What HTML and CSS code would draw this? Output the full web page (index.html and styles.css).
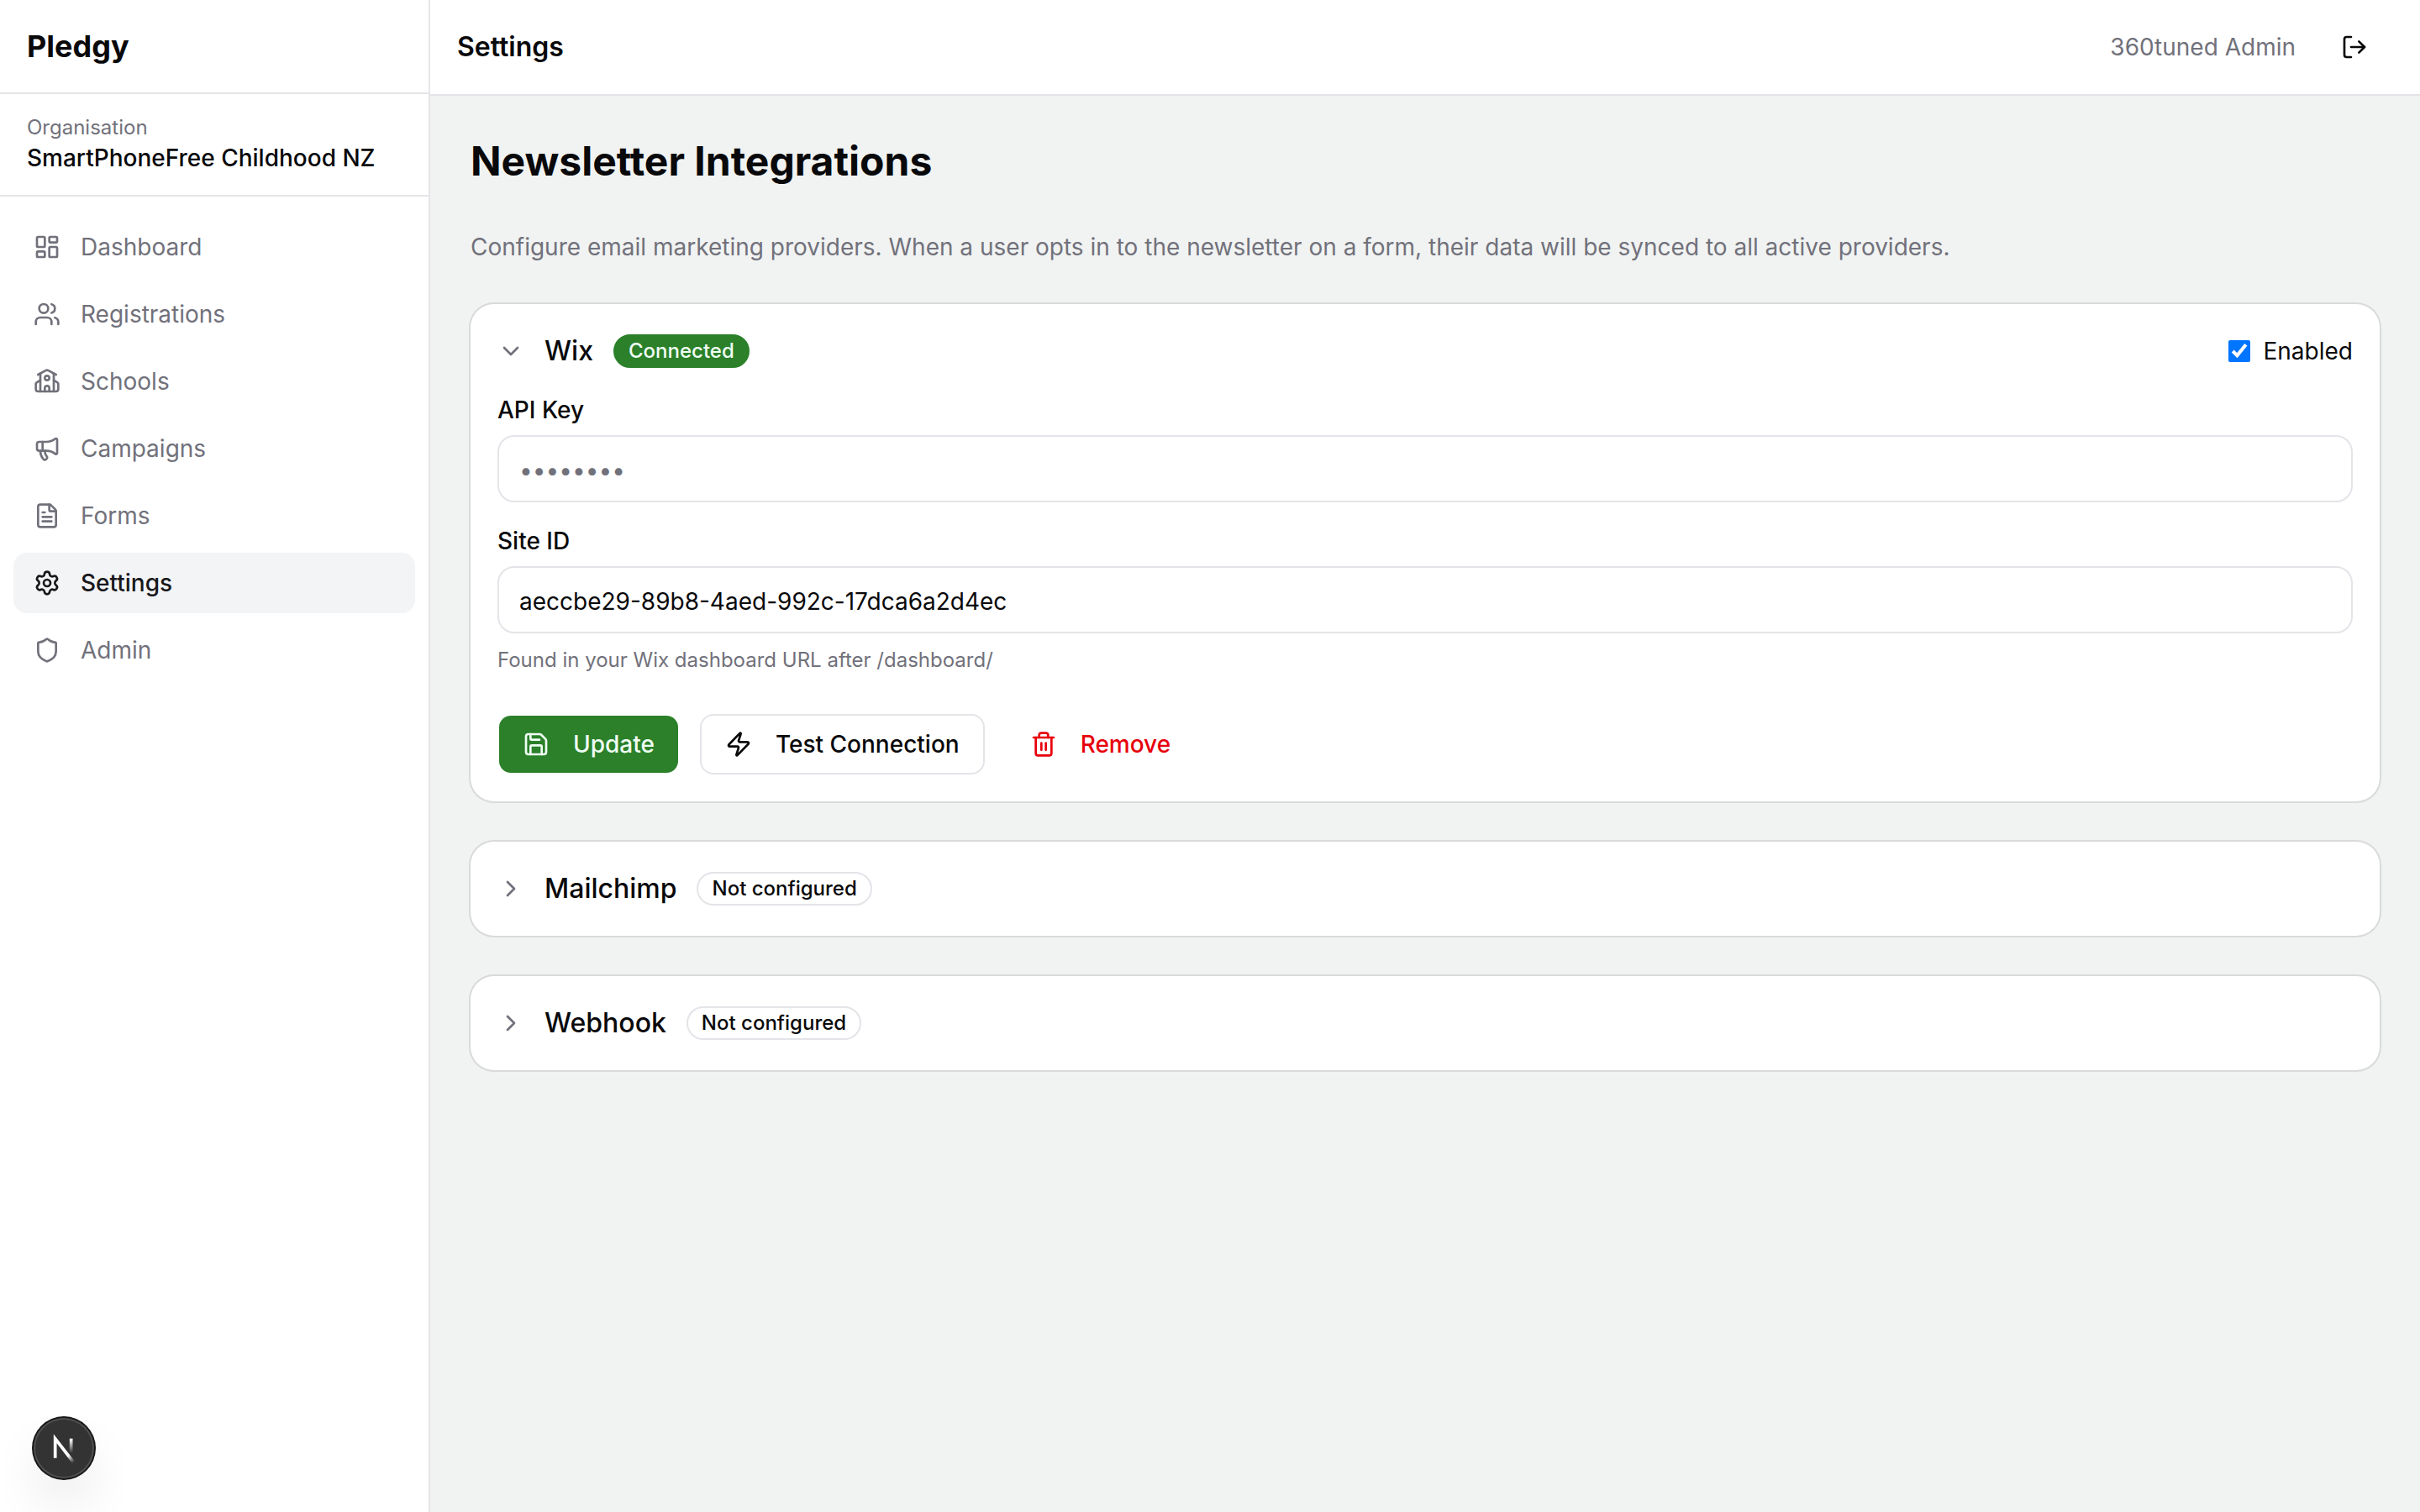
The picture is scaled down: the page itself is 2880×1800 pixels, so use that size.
FILE: index.html
```
<!DOCTYPE html>
<html lang="en">
<head>
    <meta charset="UTF-8">
    <meta name="viewport" content="width=device-width, initial-scale=1.0">
    <title>Settings - Pledgy</title>
    <link rel="stylesheet" href="styles.css">
</head>
<body>

    <div class="app">
        <aside class="sidebar">
            <div class="sidebar-brand">Pledgy</div>
            <div class="sidebar-org">
                <div class="org-label">Organisation</div>
                <div class="org-name">SmartPhoneFree Childhood NZ</div>
            </div>
            <nav class="sidebar-nav">
                <a class="nav-link" href="#dashboard">
                    <svg class="icon" viewBox="0 0 24 24"><rect width="7" height="9" x="3" y="3" rx="1"/><rect width="7" height="5" x="14" y="3" rx="1"/><rect width="7" height="9" x="14" y="12" rx="1"/><rect width="7" height="5" x="3" y="16" rx="1"/></svg>
                    Dashboard
                </a>
                <a class="nav-link" href="#registrations">
                    <svg class="icon" viewBox="0 0 24 24"><path d="M16 21v-2a4 4 0 0 0-4-4H6a4 4 0 0 0-4 4v2"/><path d="M16 3.128a4 4 0 0 1 0 7.744"/><path d="M22 21v-2a4 4 0 0 0-3-3.87"/><circle cx="9" cy="7" r="4"/></svg>
                    Registrations
                </a>
                <a class="nav-link" href="#schools">
                    <svg class="icon" viewBox="0 0 24 24"><path d="M14 21v-3a2 2 0 0 0-4 0v3"/><path d="M18 5v16"/><path d="m4 6 7.106-3.79a2 2 0 0 1 1.788 0L20 6"/><path d="m6 11-3.52 2.147a1 1 0 0 0-.48.854V19a2 2 0 0 0 2 2h16a2 2 0 0 0 2-2v-5a1 1 0 0 0-.48-.853L18 11"/><path d="M6 5v16"/><circle cx="12" cy="9" r="2"/></svg>
                    Schools
                </a>
                <a class="nav-link" href="#campaigns">
                    <svg class="icon" viewBox="0 0 24 24"><path d="M11 6a13 13 0 0 0 8.4-2.8A1 1 0 0 1 21 4v12a1 1 0 0 1-1.6.8A13 13 0 0 0 11 14H5a2 2 0 0 1-2-2V8a2 2 0 0 1 2-2z"/><path d="M6 14a12 12 0 0 0 2.4 7.2 2 2 0 0 0 3.2-2.4A8 8 0 0 1 10 14"/><path d="M8 6v8"/></svg>
                    Campaigns
                </a>
                <a class="nav-link" href="#forms">
                    <svg class="icon" viewBox="0 0 24 24"><path d="M6 22a2 2 0 0 1-2-2V4a2 2 0 0 1 2-2h8a2.4 2.4 0 0 1 1.704.706l3.588 3.588A2.4 2.4 0 0 1 20 8v12a2 2 0 0 1-2 2z"/><path d="M14 2v5a1 1 0 0 0 1 1h5"/><path d="M10 9H8"/><path d="M16 13H8"/><path d="M16 17H8"/></svg>
                    Forms
                </a>
                <a class="nav-link active" href="#settings">
                    <svg class="icon" viewBox="0 0 24 24"><path d="M9.671 4.136a2.34 2.34 0 0 1 4.659 0 2.34 2.34 0 0 0 3.319 1.915 2.34 2.34 0 0 1 2.33 4.033 2.34 2.34 0 0 0 0 3.831 2.34 2.34 0 0 1-2.33 4.033 2.34 2.34 0 0 0-3.319 1.915 2.34 2.34 0 0 1-4.659 0 2.34 2.34 0 0 0-3.32-1.915 2.34 2.34 0 0 1-2.33-4.033 2.34 2.34 0 0 0 0-3.831A2.34 2.34 0 0 1 6.35 6.051a2.34 2.34 0 0 0 3.319-1.915"/><circle cx="12" cy="12" r="3"/></svg>
                    Settings
                </a>
                <a class="nav-link" href="#admin">
                    <svg class="icon" viewBox="0 0 24 24"><path d="M20 13c0 5-3.5 7.5-7.66 8.95a1 1 0 0 1-.67-.01C7.5 20.5 4 18 4 13V6a1 1 0 0 1 1-1c2 0 4.5-1.2 6.24-2.72a1.17 1.17 0 0 1 1.52 0C14.51 3.81 17 5 19 5a1 1 0 0 1 1 1z"/></svg>
                    Admin
                </a>
            </nav>
        </aside>

        <div class="content">
            <header class="topbar">
                <div class="topbar-title">Settings</div>
                <div class="topbar-user">
                    <span>360tuned Admin</span>
                    <button class="logout" type="button" aria-label="Log out">
                        <svg class="icon" viewBox="0 0 24 24"><path d="m16 17 5-5-5-5"/><path d="M21 12H9"/><path d="M9 21H5a2 2 0 0 1-2-2V5a2 2 0 0 1 2-2h4"/></svg>
                    </button>
                </div>
            </header>

            <main class="page">
                <div class="page-head">
                    <h1>Newsletter Integrations</h1>
                </div>
                <p class="intro">Configure email marketing providers. When a user opts in to the newsletter on a form, their data will be synced to all active providers.</p>

                <section class="card">
                    <div class="card-head">
                        <button class="card-toggle" type="button" aria-expanded="true">
                            <svg class="icon" viewBox="0 0 24 24"><path d="m6 9 6 6 6-6"/></svg>
                            <span class="card-title">Wix</span>
                            <span class="badge badge-on">Connected</span>
                        </button>
                        <label class="enabled" for="wix-enabled">
                            <input type="checkbox" id="wix-enabled" checked>
                            Enabled
                        </label>
                    </div>
                    <form class="card-body">
                        <div class="field">
                            <label for="api-key">API Key</label>
                            <input type="password" id="api-key" placeholder="••••••••">
                        </div>
                        <div class="field">
                            <label for="site-id">Site ID</label>
                            <input type="text" id="site-id" value="aeccbe29-89b8-4aed-992c-17dca6a2d4ec">
                            <p class="hint">Found in your Wix dashboard URL after /dashboard/</p>
                        </div>
                        <div class="actions">
                            <button class="btn btn-primary" type="button">
                                <svg class="icon" viewBox="0 0 24 24"><path d="M15.2 3a2 2 0 0 1 1.4.6l3.8 3.8a2 2 0 0 1 .6 1.4V19a2 2 0 0 1-2 2H5a2 2 0 0 1-2-2V5a2 2 0 0 1 2-2z"/><path d="M17 21v-7a1 1 0 0 0-1-1H8a1 1 0 0 0-1 1v7"/><path d="M7 3v4a1 1 0 0 0 1 1h7"/></svg>
                                Update
                            </button>
                            <button class="btn btn-outline" type="button">
                                <svg class="icon" viewBox="0 0 24 24"><path d="M4 14a1 1 0 0 1-.78-1.63l9.9-10.2a.5.5 0 0 1 .86.46l-1.92 6.02A1 1 0 0 0 13 10h7a1 1 0 0 1 .78 1.63l-9.9 10.2a.5.5 0 0 1-.86-.46l1.92-6.02A1 1 0 0 0 11 14z"/></svg>
                                Test Connection
                            </button>
                            <button class="btn btn-danger" type="button">
                                <svg class="icon" viewBox="0 0 24 24"><path d="M10 11v6"/><path d="M14 11v6"/><path d="M19 6v14a2 2 0 0 1-2 2H7a2 2 0 0 1-2-2V6"/><path d="M3 6h18"/><path d="M8 6V4a2 2 0 0 1 2-2h4a2 2 0 0 1 2 2v2"/></svg>
                                Remove
                            </button>
                        </div>
                    </form>
                </section>

                <section class="card">
                    <div class="card-head">
                        <button class="card-toggle" type="button" aria-expanded="false">
                            <svg class="icon" viewBox="0 0 24 24"><path d="m9 18 6-6-6-6"/></svg>
                            <span class="card-title">Mailchimp</span>
                            <span class="badge">Not configured</span>
                        </button>
                    </div>
                </section>

                <section class="card">
                    <div class="card-head">
                        <button class="card-toggle" type="button" aria-expanded="false">
                            <svg class="icon" viewBox="0 0 24 24"><path d="m9 18 6-6-6-6"/></svg>
                            <span class="card-title">Webhook</span>
                            <span class="badge">Not configured</span>
                        </button>
                    </div>
                </section>
            </main>
        </div>
    </div>

    <!-- dev tools badge -->
    <button class="dev-badge" type="button" aria-label="Open dev tools">
        <svg viewBox="0 0 40 40" fill="none">
            <defs>
                <linearGradient id="fade-diagonal" x1="9.96" y1="11.12" x2="15.48" y2="17.97" gradientUnits="userSpaceOnUse">
                    <stop stop-color="white"/>
                    <stop offset="0.6" stop-color="white" stop-opacity="0"/>
                    <stop offset="1" stop-color="white" stop-opacity="0"/>
                </linearGradient>
                <linearGradient id="fade-stem" x1="11.82" y1="1.4" x2="11.79" y2="9.63" gradientUnits="userSpaceOnUse">
                    <stop stop-color="white"/>
                    <stop offset="1" stop-color="white" stop-opacity="0"/>
                </linearGradient>
            </defs>
            <g transform="translate(12.5 13.3)" stroke-width="1.86">
                <path d="M13.3 15.2 2.34 1v11.6" stroke="url(#fade-diagonal)"/>
                <path d="M11.825 1v11.6" stroke="url(#fade-stem)"/>
            </g>
        </svg>
    </button>

</body>
</html>
```
FILE: styles.css
```
* {
    box-sizing: border-box;
}
body {
    margin: 0;
    font-family: Inter, "Liberation Sans", sans-serif;
    font-size: 28px;
    line-height: 40px;
    color: #09090b;
    background-color: #f1f3f2;
}
h1, p {
    margin: 0;
}
button, input {
    font: inherit;
    color: inherit;
}
button {
    cursor: pointer;
}
.icon {
    width: 32px;
    height: 32px;
    flex-shrink: 0;
    fill: none;
    stroke: currentColor;
    stroke-width: 2;
    stroke-linecap: round;
    stroke-linejoin: round;
}
.app {
    display: flex;
    min-height: 100vh;
}

/* sidebar */
.sidebar {
    width: 512px;
    flex-shrink: 0;
    background-color: #fff;
    border-right: 2px solid #e4e4e9;
}
.sidebar-brand {
    display: flex;
    align-items: center;
    height: 112px;
    padding: 0 32px;
    border-bottom: 2px solid #e4e4e9;
    font-size: 36px;
    font-weight: 700;
}
.sidebar-org {
    padding: 24px 32px;
    border-bottom: 2px solid #e4e4e9;
}
.org-label {
    font-size: 24px;
    line-height: 32px;
    color: #71717b;
}
.org-name {
    font-weight: 500;
}
.sidebar-nav {
    display: flex;
    flex-direction: column;
    gap: 8px;
    padding: 24px 16px;
}
.nav-link {
    display: flex;
    align-items: center;
    gap: 24px;
    padding: 16px 24px;
    border-radius: 16px;
    color: #71717b;
    text-decoration: none;
}
.nav-link.active {
    background-color: #f3f4f6;
    color: #18181b;
    font-weight: 500;
}

/* top bar */
.content {
    flex: 1;
    min-width: 0;
}
.topbar {
    display: flex;
    align-items: center;
    justify-content: space-between;
    height: 114px;
    padding: 0 32px;
    background-color: #fff;
    border-bottom: 2px solid #e4e4e9;
}
.topbar-title {
    font-size: 32px;
    font-weight: 600;
}
.topbar-user {
    display: flex;
    align-items: center;
    gap: 24px;
    color: #71717b;
}
.logout {
    display: flex;
    padding: 16px 30px;
    border: 0;
    background: none;
    color: #09090b;
}

/* page */
.page {
    display: flex;
    flex-direction: column;
    gap: 48px;
    padding: 48px;
}
.page-head {
    padding-bottom: 4px;
}
h1 {
    font-size: 48px;
    line-height: 60px;
    font-weight: 700;
}
.intro {
    color: #71717b;
}
.card {
    padding: 32px;
    border-radius: 28px;
    background-color: #fff;
    box-shadow: 0 0 0 2px rgba(9, 9, 11, 0.1);
}
.card-head {
    display: flex;
    align-items: center;
    justify-content: space-between;
}
.card-toggle {
    display: flex;
    align-items: center;
    gap: 24px;
    padding: 0;
    border: 0;
    background: none;
}
.card-toggle .icon {
    color: #71717b;
}
.card-title {
    font-size: 32px;
    line-height: 48px;
    font-weight: 500;
}
.badge {
    padding: 2px 16px;
    border: 2px solid #e4e4e9;
    border-radius: 20px;
    font-size: 24px;
    line-height: 32px;
    font-weight: 500;
}
.badge-on {
    background-color: #2b8029;
    border-color: #2b8029;
    color: #f0fdf4;
}
.enabled {
    display: flex;
    align-items: center;
    gap: 16px;
}
.enabled input {
    width: 26px;
    height: 26px;
    margin: 0;
    accent-color: #0075ff;
}
.card-body {
    display: flex;
    flex-direction: column;
    gap: 32px;
    padding-top: 32px;
}
.field {
    display: flex;
    flex-direction: column;
    gap: 16px;
}
.field label {
    line-height: 28px;
    font-weight: 500;
}
.field input {
    width: 100%;
    height: 80px;
    padding: 4px 24px 0;
    border: 2px solid #e4e4e9;
    border-radius: 20px;
    background-color: #fff;
}
.field input::placeholder {
    color: #71717b;
}
.hint {
    font-size: 24px;
    line-height: 32px;
    color: #71717b;
}
.actions {
    display: flex;
    gap: 24px;
    padding-top: 16px;
}
.btn {
    display: flex;
    align-items: center;
    gap: 28px;
    padding: 14px 28px;
    border: 2px solid transparent;
    border-radius: 16px;
    background-color: transparent;
    background-clip: padding-box;
    font-weight: 500;
}
.btn-primary {
    background-color: #2b8029;
    color: #f0fdf4;
}
.btn-outline {
    background-color: #fff;
    border-color: #e4e4e9;
}
.btn-danger {
    color: #e7000b;
}

/* floats over the bottom left corner */
.dev-badge {
    position: fixed;
    left: 40px;
    bottom: 40px;
    display: flex;
    align-items: center;
    justify-content: center;
    width: 72px;
    height: 72px;
    padding: 0;
    border: 0;
    border-radius: 50%;
    background-color: #333;
    box-shadow: 0 0 0 2px #171717, inset 0 0 0 2px rgba(255, 255, 255, 0.14), 0 32px 64px -16px rgba(0, 0, 0, 0.24);
}
.dev-badge svg {
    width: 80px;
    height: 80px;
    flex-shrink: 0;
}
```
